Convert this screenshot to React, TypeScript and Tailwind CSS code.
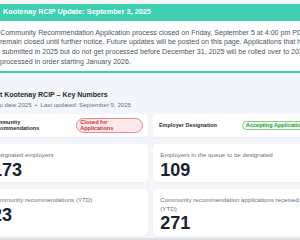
export default function App() {
  return (
    <div className="relative w-[300px] h-[240px] overflow-hidden bg-[#f3f5f8] font-['Liberation_Sans',Arial,sans-serif]">
      <div className="pt-[4px]">
        <div className="bg-white border-b-2 border-[#3ecfb1]">
          <div className="h-[17px] bg-[#3ecfb1] flex items-center pl-[3px] text-white font-bold text-[7.3px] whitespace-nowrap">
            Kootenay RCIP Update: September 3, 2025
          </div>
          <div className="pt-[7.5px] pb-[4px] text-[7.1px] leading-[9.7px] text-[#4b5563] whitespace-nowrap">
            <div className="pl-[0.3px]">Community Recommendation Application process closed on Friday, September 5 at 4:00 pm PDT and will</div>
            <div>remain closed until further notice. Future updates will be posted on this page. Applications that have been</div>
            <div className="pl-[2px]">submitted in 2025 but do not get processed before December 31, 2025 will be rolled over to 2026 and</div>
            <div>processed in order starting January 2026.</div>
          </div>
        </div>

        <div className="ml-[-15px] w-[331px]">
          <div className="mt-[16.5px] pl-[2.5px] text-[7px] leading-[10px] font-bold text-[#1f2937] whitespace-nowrap">
            East Kootenay RCIP – Key Numbers
          </div>
          <div className="mt-[1px] ml-[-1.3px] text-[6.1px] leading-[8px] text-[#6b7280] whitespace-nowrap">
            Year to date 2025 &nbsp;•&nbsp; Last updated: September 9, 2025
          </div>

          <div className="mt-[5px] grid grid-cols-2 gap-x-[5.6px]">
            <div className="h-[23.3px] bg-white rounded-[4px] shadow-[0_1px_2px_rgba(0,0,0,0.04)] px-[5px] flex items-center justify-between">
              <div className="text-[5.5px] leading-[6.6px] font-bold text-[#1f2937] whitespace-nowrap">
                <div>Community</div>
                <div>Recommendations</div>
              </div>
              <div className="w-[67px] rounded-full border border-[#ee8a8a] bg-[#fde9e9] text-[#cf2e2e] text-[5.5px] leading-[6px] font-bold px-[3.5px] py-[0.5px]">
                Closed for Applications
              </div>
            </div>
            <div className="h-[23.3px] bg-white rounded-[4px] shadow-[0_1px_2px_rgba(0,0,0,0.04)] pl-[5.6px] pr-[5px] flex items-center justify-between">
              <div className="text-[5.5px] leading-[6.6px] font-bold text-[#1f2937] whitespace-nowrap">
                Employer Designation
              </div>
              <div className="w-[69px] rounded-full border border-[#7fcf86] bg-[#ecf8ec] text-[#2e9e3c] text-[5.5px] leading-[6.5px] font-bold px-[3px] py-[0.5px] whitespace-nowrap overflow-hidden">
                Accepting Applications
              </div>
            </div>
          </div>

          <div className="mt-[6.7px] grid grid-cols-2 gap-x-[5.6px] gap-y-[7.3px]">
            {[
              ["Designated employers", "173"],
              ["Employers in the queue to be designated", "109"],
              ["Community recommendations (YTD)", "23"],
              ["Community recommendation applications received (YTD)", "271"],
            ].map(([label, value]) => (
              <div key={label} className="bg-white rounded-[5px] shadow-[0_1px_2px_rgba(0,0,0,0.04)] pt-[7px] px-[7px] pb-[3.5px]">
                <div className="text-[6.2px] leading-[8.3px] text-[#6b7280]">{label}</div>
                <div className="mt-[1.5px] text-[18px] leading-[18px] font-bold text-[#1a2232]">{value}</div>
              </div>
            ))}
          </div>
        </div>
      </div>
      <div className="absolute left-0 right-0 bottom-0 h-[2px] bg-[#dcdfe4]" />
    </div>
  );
}
